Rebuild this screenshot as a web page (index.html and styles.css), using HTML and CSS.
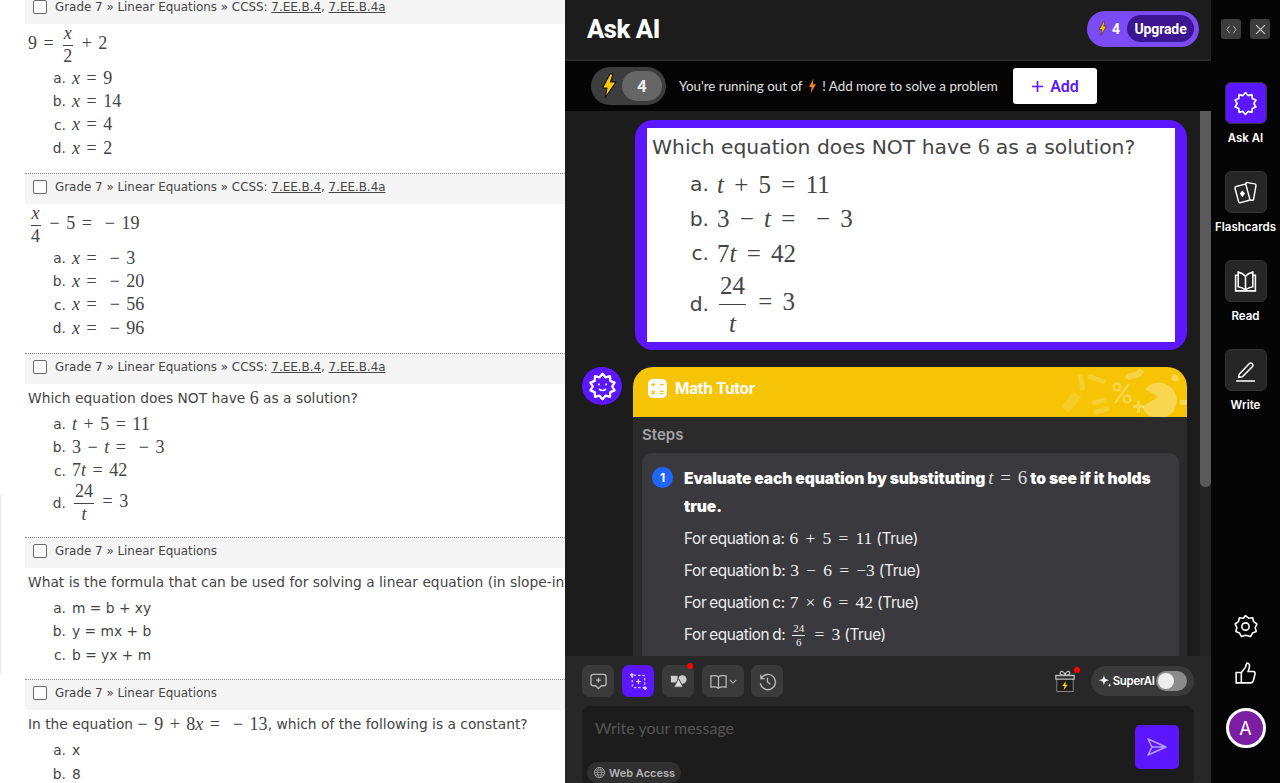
FILE: index.html
```html
<!DOCTYPE html>
<html lang="en">
<head>
<meta charset="utf-8">
<title>Ask AI</title>
<link rel="stylesheet" href="styles.css">
</head>
<body>
<main class="worksheet">
  <section class="item">
    <div class="bar"><span class="check"></span><span>Grade 7 » Linear Equations » CCSS: <u>7.EE.B.4</u>, <u>7.EE.B.4a</u></span></div>
    <div class="q tall"><span class="m">9 = <span class="frac"><span><i>x</i></span><span>2</span></span> + 2</span></div>
    <div class="opt"><b>a.</b><span class="m"><i>x</i> = 9</span></div>
    <div class="opt"><b>b.</b><span class="m"><i>x</i> = 14</span></div>
    <div class="opt"><b>c.</b><span class="m"><i>x</i> = 4</span></div>
    <div class="opt"><b>d.</b><span class="m"><i>x</i> = 2</span></div>
  </section>
  <section class="item">
    <div class="bar"><span class="check"></span><span>Grade 7 » Linear Equations » CCSS: <u>7.EE.B.4</u>, <u>7.EE.B.4a</u></span></div>
    <div class="q tall"><span class="m"><span class="frac"><span><i>x</i></span><span>4</span></span> − 5 = &nbsp;− 19</span></div>
    <div class="opt"><b>a.</b><span class="m"><i>x</i> = &nbsp;− 3</span></div>
    <div class="opt"><b>b.</b><span class="m"><i>x</i> = &nbsp;− 20</span></div>
    <div class="opt"><b>c.</b><span class="m"><i>x</i> = &nbsp;− 56</span></div>
    <div class="opt"><b>d.</b><span class="m"><i>x</i> = &nbsp;− 96</span></div>
  </section>
  <section class="item">
    <div class="bar"><span class="check"></span><span>Grade 7 » Linear Equations » CCSS: <u>7.EE.B.4</u>, <u>7.EE.B.4a</u></span></div>
    <div class="q">Which equation does NOT have <span class="m">6</span> as a solution?</div>
    <div class="opt"><b>a.</b><span class="m"><i>t</i> + 5 = 11</span></div>
    <div class="opt"><b>b.</b><span class="m">3 − <i>t</i> = &nbsp;− 3</span></div>
    <div class="opt"><b>c.</b><span class="m">7<i>t</i> = 42</span></div>
    <div class="opt opt-frac"><b>d.</b><span class="m"><span class="frac"><span>24</span><span><i>t</i></span></span> = 3</span></div>
  </section>
  <section class="item">
    <div class="bar"><span class="check"></span><span>Grade 7 » Linear Equations</span></div>
    <div class="q">What is the formula that can be used for solving a linear equation (in slope-intercept form)?</div>
    <div class="opt"><b>a.</b><span>m = b + xy</span></div>
    <div class="opt"><b>b.</b><span>y = mx + b</span></div>
    <div class="opt"><b>c.</b><span>b = yx + m</span></div>
  </section>
  <section class="item">
    <div class="bar"><span class="check"></span><span>Grade 7 » Linear Equations</span></div>
    <div class="q">In the equation <span class="m">− 9 + 8<i>x</i> = &nbsp;− 13</span>, which of the following is a constant?</div>
    <div class="opt"><b>a.</b><span>x</span></div>
    <div class="opt"><b>b.</b><span>8</span></div>
  </section>
</main>

<div class="panel">
  <header class="head">
    <h1>Ask AI</h1>
    <div class="upgrade">
      <svg class="bolt-s" viewBox="0 0 16 26"><path d="M10 1 2 15h5L5 25 15 9h-5l2-8z" fill="#ffc60a" stroke="#3a1a00" stroke-width="1"/></svg>
      <span class="up-n">4</span>
      <span class="up-btn">Upgrade</span>
    </div>
  </header>
  <div class="notice">
    <div class="credits">
      <svg class="bolt" viewBox="0 0 16 26"><path d="M9 1 1.500 15H6L4 25 15 9H9.500L12 1z" fill="#ffc60a" stroke="#111" stroke-width="1.100" stroke-linejoin="round"/></svg>
      <span class="cred-n">4</span>
    </div>
    <p>You're running out of <svg class="bolt-o" viewBox="0 0 10 16"><path d="M6 0 1 9h3l-1 7 6-10H5.500z" fill="#f5821f"/></svg> ! Add more to solve a problem</p>
    <button class="add"><svg viewBox="0 0 14 14"><path d="M7 1v12M1 7h12" stroke="#5b17ff" stroke-width="1.800" fill="none"/></svg>Add</button>
  </div>
  <div class="scroll">
    <div class="thread">
      <div class="shot">
        <div class="shot-in">
          <div class="shot-q">Which equation does NOT have <span class="m">6</span> as a solution?</div>
          <div class="s-opt"><b>a.</b><span class="m"><i>t</i> + 5 = 11</span></div>
          <div class="s-opt"><b>b.</b><span class="m">3 − <i>t</i> = &nbsp;− 3</span></div>
          <div class="s-opt"><b>c.</b><span class="m">7<i>t</i> = 42</span></div>
          <div class="s-opt s-frac"><b>d.</b><span class="m"><span class="frac"><span>24</span><span><i>t</i></span></span> = 3</span></div>
        </div>
      </div>
      <div class="answer">
        <div class="avatar">
          <svg viewBox="0 0 24 24"><polygon points="12,1.500 14.470,4.390 18.170,3.500 18.470,7.300 21.990,8.760 20,12 21.990,15.240 18.470,16.700 18.170,20.500 14.470,19.610 12,22.500 9.530,19.610 5.830,20.500 5.530,16.700 2.010,15.240 4,12 2.010,8.760 5.530,7.300 5.830,3.500 9.530,4.390" fill="none" stroke="#fff" stroke-width="1.900" stroke-linejoin="round"/><path d="M9 9.500v1.500M15 9.500v1.500M9 14c1.800 1.600 4.200 1.600 6 0" fill="none" stroke="#fff" stroke-width="1.300"/></svg>
        </div>
        <article class="tutor">
          <div class="tutor-head">
            <svg class="calc" viewBox="0 0 20 20"><rect width="20" height="20" rx="5" fill="#fff"/><path d="M3.500 6h4M5.500 4v4M12.500 6h4M3.800 12.500l3.500 3.500M7.300 12.500 3.800 16M12.500 13h4M12.500 15.500h4" stroke="#f5c400" stroke-width="1.300" fill="none"/></svg>
            <span>Math Tutor</span>
            <svg class="deco" viewBox="0 0 130 50">
              <g fill="#fff" fill-opacity=".3">
                <path d="M88 22 101 30 85 40A18 18 0 1 0 88 22z"/>
                <circle cx="118" cy="11" r="3.500"/>
                <rect x="123" y="33" width="7" height="5"/>
                <rect x="9" y="25" width="10" height="20" transform="rotate(40 14 35)" fill-opacity=".14"/>
                <rect x="35" y="32" width="15" height="5" transform="rotate(-15 42 34)" fill-opacity=".18"/>
                <rect x="37" y="41" width="15" height="5" transform="rotate(-15 44 43)" fill-opacity=".18"/>
                <path d="M76 38h4v-4h3v4h4v3h-4v5h-3v-5h-4z"/>
              </g>
              <g fill="none" stroke="#fff" stroke-opacity=".18" stroke-width="5">
                <path d="M23 8l3 15M31 9l17 6"/>
              </g>
              <g fill="none" stroke="#fff" stroke-opacity=".28" stroke-width="2.500">
                <path d="M58 36 72 17"/>
                <circle cx="60" cy="20" r="3.500"/>
                <circle cx="70" cy="32" r="3.500"/>
              </g>
              <path d="M70 12c4-7 9 0 15-9" fill="none" stroke="#fff" stroke-opacity=".25" stroke-width="6"/>
            </svg>
          </div>
          <div class="tutor-body">
            <h2>Steps</h2>
            <div class="step">
              <div class="step-title"><span class="num">1</span><strong>Evaluate each equation by substituting <span class="m light"><i>t</i> = 6</span> to see if it holds true.</strong></div>
              <ul>
                <li>For equation a: <span class="m">6 + 5 = 11</span> (True)</li>
                <li>For equation b: <span class="m">3 − 6 = −3</span> (True)</li>
                <li>For equation c: <span class="m">7 × 6 = 42</span> (True)</li>
                <li>For equation d: <span class="m"><span class="frac small"><span>24</span><span>6</span></span> = 3</span> (True)</li>
              </ul>
            </div>
          </div>
        </article>
      </div>
    </div>
    <div class="track"><div class="thumb"></div></div>
  </div>
  <footer class="composer">
    <div class="tools">
      <span class="tool"><svg viewBox="0 0 20 20"><path d="M4.500 2.500h11a2.500 2.500 0 0 1 2.500 2.500v7a2.500 2.500 0 0 1-2.500 2.500H13L10 17.500 7 14.500H4.500A2.500 2.500 0 0 1 2 12V5a2.500 2.500 0 0 1 2.500-2.500zM10 6v5M7.500 8.500h5" fill="none" stroke="#bbb" stroke-width="1.400"/></svg></span>
      <span class="tool on"><svg viewBox="0 0 20 20"><path d="M5 3.500h10a1.500 1.500 0 0 1 1.500 1.500v10a1.500 1.500 0 0 1-1.500 1.500H5A1.500 1.500 0 0 1 3.500 15V5A1.500 1.500 0 0 1 5 3.500z" fill="none" stroke="#cdbaff" stroke-width="1.400" stroke-dasharray="2.500 2"/><path d="M10 7.500v5M7.500 10h5M1 3h4M3 1v4M15 17h4M17 15v4" stroke="#e8e0ff" stroke-width="1.300" fill="none"/></svg></span>
      <span class="tool dot"><svg viewBox="0 0 20 20"><rect x="2" y="4" width="7" height="7" fill="#ccc"/><circle cx="14" cy="8" r="4.500" fill="#ccc"/><path d="M10 7l5 9H5z" fill="#ddd" stroke="#3a3a3a"/></svg></span>
      <span class="tool wide"><svg viewBox="0 0 20 20"><path d="M10 5C8 3.500 5 3.500 2 4v12c3-.5 6-.5 8 1 2-1.500 5-1.500 8-1V4c-3-.5-6-.5-8 1zv12" fill="none" stroke="#bbb" stroke-width="1.300"/></svg><svg class="chev" viewBox="0 0 10 6"><path d="M1 1l4 4 4-4" fill="none" stroke="#bbb" stroke-width="1.300"/></svg></span>
      <span class="tool"><svg viewBox="0 0 20 20"><path d="M3 3v4h4M3.500 6.500A8 8 0 1 1 2.500 12M10 6v4.500l3 2.500" fill="none" stroke="#bbb" stroke-width="1.400"/></svg></span>
      <span class="spacer"></span>
      <span class="gift"><svg viewBox="0 0 24 26"><path d="M12 7C8 7 6 5.500 7 3.500S11 2 12 7c1-5 4-5.500 5-3.500S16 7 12 7zM2 7h20v4H2zM3.500 11h17v13h-17z" fill="none" stroke="#bbb" stroke-width="1.400"/><path d="M3.500 12h17v12h-17z" fill="#1c1c1c"/><path d="M13 13 9 18.500h2.500l-1 4.500L15 17h-2.500z" fill="#ffc60a"/></svg></span>
      <span class="super">
        <svg viewBox="0 0 16 16"><path d="M7 1c.7 4.200 1.800 5.300 6 6-4.200.7-5.300 1.800-6 6-.7-4.200-1.800-5.300-6-6 4.200-.7 5.300-1.800 6-6zM13.500 11l.5 1.500 1.500.5-1.500.5-.5 1.500-.5-1.500-1.500-.5 1.500-.5z" fill="#fff"/></svg>
        <span>SuperAI</span>
        <span class="switch"><span></span></span>
      </span>
    </div>
    <div class="input">
      <div class="input-main">
        <span class="ph">Write your message</span>
        <span class="web"><svg viewBox="0 0 14 14"><circle cx="7" cy="7" r="5.500" fill="none" stroke="#aaa"/><path d="M1.500 7h11M2.300 4.500h9.400M2.300 9.500h9.400M7 1.500c-3 3.500-3 7.500 0 11 3-3.500 3-7.500 0-11z" fill="none" stroke="#aaa" stroke-width=".8"/></svg>Web Access</span>
      </div>
      <button class="send"><svg viewBox="0 0 22 20"><path d="M2 2l18 8-18 8 4-8zM6 10h14" fill="none" stroke="#b79cff" stroke-width="1.500" stroke-linejoin="round"/></svg></button>
    </div>
  </footer>
</div>

<nav class="rail">
  <div class="win"><span><svg viewBox="0 0 12 10"><path d="M4 1 1 5l3 4M8 1l3 4-3 4" fill="none" stroke="#bbb"/></svg></span><span><svg viewBox="0 0 10 10"><path d="M1 1l8 8M9 1 1 9" fill="none" stroke="#ccc"/></svg></span></div>
  <a class="nav on"><span class="nav-ico"><svg viewBox="0 0 24 24"><polygon points="12,1.500 14.470,4.390 18.170,3.500 18.470,7.300 21.990,8.760 20,12 21.990,15.240 18.470,16.700 18.170,20.500 14.470,19.610 12,22.500 9.530,19.610 5.830,20.500 5.530,16.700 2.010,15.240 4,12 2.010,8.760 5.530,7.300 5.830,3.500 9.530,4.390" fill="none" stroke="#fff" stroke-width="1.600" stroke-linejoin="round"/></svg></span>Ask AI</a>
  <a class="nav"><span class="nav-ico"><svg viewBox="0 0 24 24"><rect x="11" y="3" width="10" height="16" rx="1.500" transform="rotate(10 16 11)" fill="none" stroke="#fff" stroke-width="1.400"/><rect x="3.500" y="5" width="11" height="16" rx="1.500" transform="rotate(-15 9 13)" fill="#262626" stroke="#fff" stroke-width="1.400"/><path d="M9 10l2.500 3L9 16.500 6.500 13z" fill="#fff"/></svg></span>Flashcards</a>
  <a class="nav"><span class="nav-ico"><svg viewBox="0 0 24 24"><path d="M12 7C10 4.500 7 3.500 5 3v14c3 .5 5 1.500 7 3 2-1.500 4-2.500 7-3V3c-2 .5-5 1.500-7 4zv13M5 6H2.500v15h19V6H19" fill="none" stroke="#fff" stroke-width="1.500"/></svg></span>Read</a>
  <a class="nav"><span class="nav-ico"><svg viewBox="0 0 24 24"><path d="M6 15.500 15.500 5.500a2 2 0 0 1 3 3L9 18l-3.500.5zM3 22h18" fill="none" stroke="#fff" stroke-width="1.400"/></svg></span>Write</a>
  <span class="rail-gap"></span>
  <svg class="rail-ico" viewBox="0 0 24 24"><path d="M12 1.500l3 2.500 3.900-.4.900 3.800 3.200 2.200-1.700 3.500 1 3.700-3.600 1.500-1.900 3.400L12 20.500l-3.800 1.200-1.900-3.400-3.600-1.500 1-3.700L2 9.600l3.200-2.200.9-3.800L10 4z" fill="none" stroke="#fff" stroke-width="1.500" stroke-linejoin="round"/><circle cx="12" cy="12" r="3.500" fill="none" stroke="#fff" stroke-width="1.500"/></svg>
  <svg class="rail-ico" viewBox="0 0 24 24"><path d="M3 11h5v10H3zM8 11l4-5c.5-2 .5-3 1.500-4 2 0 3 2 2 5l-1 3h5c1.500 0 2 1.500 1.500 3l-1.500 6c-.3 1.300-1 2-2.500 2H8" fill="none" stroke="#fff" stroke-width="1.500"/></svg>
  <span class="user">A</span>
</nav>
</body>
</html>
```

FILE: styles.css
```css
* { box-sizing: border-box; }
html, body { height: 100%; }
body {
  margin: 0;
  height: 783px;
  overflow: hidden;
  display: flex;
  background: #fff;
  font-family: "DejaVu Sans", sans-serif;
}
.m {
  font-family: "Liberation Serif", serif;
  font-size: 18px;
  word-spacing: 2px;
  white-space: nowrap;
}
.m i { font-style: italic; }
.frac {
  display: inline-flex;
  flex-direction: column;
  align-items: center;
  vertical-align: middle;
  margin: 0 2px;
  line-height: 1.1;
}
.frac > span { padding: 0 1px; }
.frac > span:first-child { border-bottom: 1px solid currentColor; padding-bottom: 1px; }
.frac > span:last-child { padding-top: 1px; }

/* worksheet */
.worksheet {
  width: 565px;
  flex: none;
  height: 783px;
  overflow: hidden;
  padding-left: 25px;
  color: #444;
  font-size: 13.800px;
  position: relative;
}
.worksheet::before {
  content: "";
  position: absolute;
  left: 0;
  top: 495px;
  width: 1px;
  height: 179px;
  background: #e8e8e8;
}
.item {
  margin: 0;
  padding-bottom: 13px;
  border-top: 1px dotted #888;
  white-space: nowrap;
}
.item:first-child { margin-top: -7px; }
.bar {
  height: 30px;
  background: #f5f5f5;
  display: flex;
  align-items: center;
  padding: 0 0 4px 8px;
  gap: 8px;
  font-size: 11.900px;
}
.check {
  width: 14px;
  height: 14px;
  border: 1.500px solid #666;
  border-radius: 2px;
  background: #fff;
}
.q {
  height: 28.500px;
  padding: 4px 0 0 3px;
  line-height: 20px;
  display: flex;
  white-space: pre;
}
.q.tall { height: 42.400px; align-items: center; padding-top: 0; }
.opt {
  height: 23.400px;
  display: flex;
  align-items: center;
  gap: 6px;
}
.opt b { font-weight: 400; width: 41px; text-align: right; flex: none; }
.opt-frac { height: 41px; }

/* panel */
.panel {
  width: 646px;
  flex: none;
  height: 783px;
  background: #1c1c1c;
  display: flex;
  flex-direction: column;
  font-family: Inter, sans-serif;
  color: #fff;
}
.head {
  height: 61px;
  flex: none;
  display: flex;
  align-items: center;
  justify-content: space-between;
  padding: 0 12px 2px 22px;
  border-bottom: 2px solid #2c2c2c;
}
.head h1 {
  margin: 0;
  font-size: 25.500px;
  font-weight: 800;
  letter-spacing: -.4px;
  font-family: "Roboto", sans-serif;
}
.upgrade {
  height: 36px;
  width: 112px;
  border-radius: 18px;
  background: #7b4bf5;
  display: flex;
  align-items: center;
  padding: 0 5px 0 11px;
  gap: 3px;
  font-family: Roboto, sans-serif;
  font-weight: 700;
}
.bolt-s { width: 9px; height: 15px; }
.up-n { font-size: 14px; flex: 1; padding-left: 2px; }
.up-btn {
  width: 67px;
  height: 27px;
  border-radius: 14px;
  background: #3c1590;
  font-size: 14px;
  letter-spacing: -.1px;
  display: flex;
  align-items: center;
  justify-content: center;
}
.notice {
  height: 50px;
  flex: none;
  background: #050505;
  display: flex;
  align-items: center;
  padding: 0 0 0 26px;
  font-family: Lato, sans-serif;
}
.credits {
  width: 75px;
  height: 38px;
  border-radius: 19px;
  background: #3d3d3d;
  display: flex;
  align-items: center;
  padding: 0 4px 0 10px;
  justify-content: space-between;
}
.bolt { width: 16px; height: 26px; }
.cred-n {
  width: 40px;
  height: 30px;
  border-radius: 15px;
  background: #666;
  text-align: center;
  font: 700 17px/30px Roboto, sans-serif;
  color: #eee;
}
.notice p {
  margin: 0 0 0 13px;
  font-size: 13.400px;
  color: #e0e0e0;
  width: 334px;
  white-space: nowrap;
}
.bolt-o { width: 9px; height: 14px; vertical-align: -2px; margin: 0 2px; }
.add {
  width: 84px;
  height: 36px;
  background: #fff;
  border: 0;
  border-radius: 3px;
  color: #5b17ff;
  font: 600 16px Roboto, sans-serif;
  display: flex;
  align-items: center;
  justify-content: center;
  gap: 6px;
}
.add svg { width: 13px; height: 13px; }
.scroll {
  flex: 1;
  min-height: 0;
  display: flex;
  overflow: hidden;
}
.thread {
  flex: 1;
  min-width: 0;
  padding: 9px 0 0 17px;
}
.shot {
  margin: 0 0 17px 53px;
  width: 552px;
  height: 230px;
  background: #5b17ff;
  border-radius: 18px;
  padding: 8px 12px;
}
.shot-in {
  height: 214px;
  background: #fff;
  color: #444;
  font-family: "DejaVu Sans", sans-serif;
  font-size: 20.300px;
  padding: 0 0 0 5px;
}
.shot-q { height: 39px; line-height: 37px; white-space: nowrap; }
.s-opt { height: 34.500px; display: flex; align-items: center; gap: 8px; line-height: 1; }
.s-opt b { font-weight: 400; width: 57px; text-align: right; flex: none; }
.s-frac { height: 68px; }
.shot-q .m { font-size: 23px; }
.s-opt .m { font-size: 25px; word-spacing: 4px; }
.s-opt .frac > span:first-child { padding-bottom: 4px; }
.s-opt .frac > span:last-child { padding-top: 5px; }
.answer { display: flex; align-items: flex-start; gap: 11px; }
.avatar {
  width: 40px;
  height: 38px;
  flex: none;
  border-radius: 50%;
  background: #5b17ff;
  display: flex;
  align-items: center;
  justify-content: center;
}
.avatar svg { width: 29px; height: 29px; }
.tutor {
  width: 554px;
  border-radius: 20px 20px 0 0;
  background: #2b2b2b;
  overflow: hidden;
}
.tutor-head {
  height: 50px;
  background: #f5c404;
  position: relative;
  display: flex;
  align-items: center;
  padding: 0 0 8px 15px;
  gap: 8px;
  font: 700 15.500px Inter, sans-serif;
  letter-spacing: -.3px;
}
.calc { width: 19px; height: 19px; }
.deco { position: absolute; right: 0; top: 0; width: 130px; height: 50px; }
.tutor-body { padding: 0 8px 0 9px; height: 240px; }
.tutor-body h2 { margin: 0; height: 36px; font-size: 15px; line-height: 36px; color: #a3a3a3; font-weight: 600; }
.step {
  height: 220px;
  background: #3a3a3e;
  border-radius: 10px;
  padding: 11px 10px;
  font-size: 15.600px;
}
.step-title { display: flex; gap: 11px; line-height: 28px; font-weight: 700; letter-spacing: -.1px; }
.step-title .m { font-size: 19px; letter-spacing: 0; }
.num {
  width: 21px;
  height: 21px;
  flex: none;
  border-radius: 50%;
  background: #1f66ff;
  font-size: 12px;
  line-height: 21px;
  text-align: center;
  margin-top: 3px;
}
.m.light { font-weight: 400; color: #ddd; }
.step ul { list-style: none; margin: 1px 0 0 32px; padding: 0; }
.step li {
  height: 32px;
  line-height: 32px;
  font-size: 15.300px;
  letter-spacing: -.35px;
  word-spacing: -1px;
  color: #eee;
  white-space: nowrap;
}
.step li .m { letter-spacing: 0; word-spacing: 2.800px; font-size: 17.500px; margin: 0 1px 0 2px; }
.frac.small { font-size: 11px; line-height: 1.05; }
.track { width: 11px; flex: none; background: #242424; position: relative; }
.thumb { width: 11px; height: 376px; background: #5a5a5a; border-radius: 0 0 5px 5px; }
.composer {
  height: 127px;
  flex: none;
  background: #272727;
  padding: 9px 17px 0;
  position: relative;
  z-index: 1;
}
.tools { display: flex; align-items: center; height: 32px; gap: 8px; }
.tool {
  width: 32px;
  height: 32px;
  border-radius: 7px;
  background: #3a3a3a;
  display: flex;
  align-items: center;
  justify-content: center;
  position: relative;
  flex: none;
}
.tool svg { width: 19px; height: 19px; }
.tool.on { background: #5b17ff; }
.tool.wide { width: 42px; gap: 1px; margin-right: -1px; }
.tool .chev { width: 8px; height: 5px; }
.tool.dot::after {
  content: "";
  position: absolute;
  right: 1px;
  top: -2px;
  width: 6px;
  height: 6px;
  border-radius: 50%;
  background: #f00;
}
.spacer { flex: 1; }
.gift { width: 24px; height: 26px; position: relative; margin-right: 5px; }
.gift svg { width: 22px; height: 26px; }
.gift::after {
  content: "";
  position: absolute;
  right: -2px;
  top: -1px;
  width: 6px;
  height: 6px;
  border-radius: 50%;
  background: #f00;
}
.super {
  width: 103px;
  height: 30px;
  border-radius: 15px;
  background: #3a3a3a;
  display: flex;
  align-items: center;
  padding: 0 7px 0 7px;
  gap: 1px;
  font-size: 11.500px;
  font-weight: 600;
  letter-spacing: -.3px;
}
.super > svg { width: 14px; height: 14px; }
.switch {
  width: 32px;
  height: 20px;
  border-radius: 10px;
  background: #8c8c8c;
  margin-left: auto;
  padding: 2px;
}
.switch span { display: block; width: 16px; height: 16px; border-radius: 50%; background: #eee; }
.input {
  margin-top: 9px;
  width: 612px;
  height: 80px;
  background: #1c1c1c;
  border-radius: 8px;
  display: flex;
  justify-content: space-between;
  padding: 0 15px 0 5px;
}
.input-main { display: flex; flex-direction: column; align-items: flex-start; }
.ph { font: 400 16px/20px Lato, sans-serif; color: #555; padding: 12px 0 0 8px; height: 56px; }
.web {
  height: 21px;
  border-radius: 11px;
  padding: 0 6px;
  background: #303030;
  color: #b5b5b5;
  display: flex;
  align-items: center;
  gap: 3px;
  font-size: 11px;
  font-weight: 600;
}
.web svg { width: 13px; height: 13px; }
.send {
  width: 44px;
  height: 44px;
  margin-top: 19px;
  background: #5b17ff;
  border: 0;
  border-radius: 5px;
  display: flex;
  align-items: center;
  justify-content: center;
}
.send svg { width: 22px; height: 20px; }

/* rail */
.rail {
  width: 69px;
  flex: none;
  height: 783px;
  background: #050505;
  color: #fff;
  font-family: Inter, sans-serif;
  display: flex;
  flex-direction: column;
  align-items: center;
  padding-top: 19px;
}
.win { display: flex; gap: 9px; height: 63px; }
.win span {
  width: 20px;
  height: 20px;
  border-radius: 3px;
  background: #3d3d3d;
  display: flex;
  align-items: center;
  justify-content: center;
}
.win svg { width: 11px; height: 11px; }
.nav {
  display: flex;
  flex-direction: column;
  align-items: center;
  height: 89px;
  font-size: 11.500px;
  font-weight: 600;
  gap: 7px;
  white-space: nowrap;
}
.nav-ico {
  width: 42px;
  height: 42px;
  border-radius: 6px;
  background: #262626;
  border: 1px solid #333;
  display: flex;
  align-items: center;
  justify-content: center;
}
.nav.on .nav-ico { background: #5b17ff; }
.nav-ico svg { width: 25px; height: 25px; }
.rail-gap { flex: 1; }
.rail-ico { width: 25px; height: 25px; margin-bottom: 22px; flex: none; }
.user {
  width: 40px;
  height: 40px;
  margin-bottom: 35px;
  border-radius: 50%;
  background: #7b1fa2;
  border: 3px solid #fff;
  display: flex;
  align-items: center;
  justify-content: center;
  font-size: 18px;
}
```
